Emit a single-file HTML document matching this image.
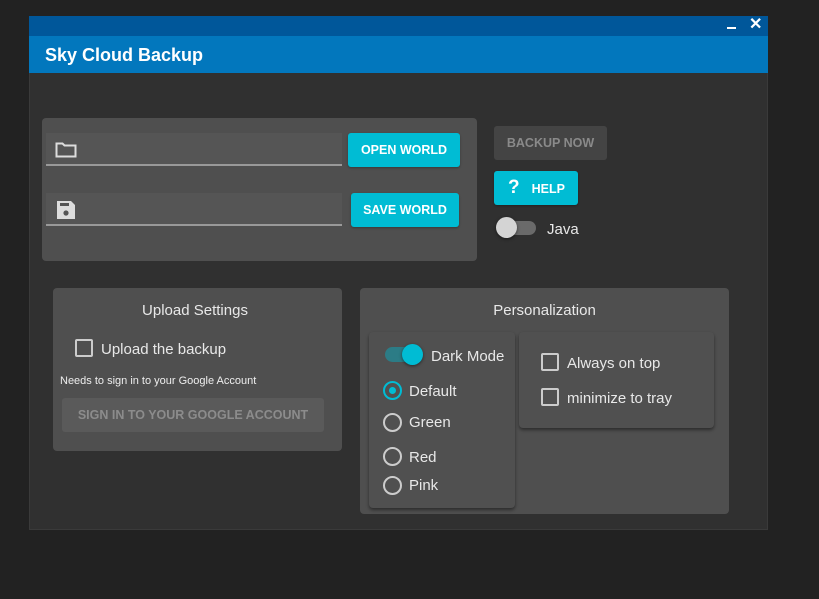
<!DOCTYPE html>
<html><head><meta charset="utf-8"><style>
*{box-sizing:border-box;margin:0;padding:0}
body{width:819px;height:599px;background:#222;font-family:"Liberation Sans",sans-serif;position:relative;overflow:hidden;color:#e8e8e8}
.a{position:absolute}
.win{left:29px;top:16px;width:739px;height:514px;background:#303030;border:1px solid #3a3a3a}
.strip{left:29px;top:16px;width:739px;height:20px;background:#00579a}
.title{left:29px;top:36px;width:739px;height:37px;background:#0277bd;color:#fff;font-size:18px;font-weight:bold;padding:9px 0 0 16px}
.panel{background:#4f4f4f;border-radius:4px}
.field{background:#555;border-bottom:2px solid #999}
.btn{background:#00bcd4;color:#fff;font-weight:bold;font-size:12.5px;border-radius:3px;text-align:center;box-shadow:0 1px 2px rgba(0,0,0,.3)}
.card{background:#505050;border-radius:4px;box-shadow:0 2px 3px rgba(0,0,0,.45)}
.cb{width:18px;height:18px;border:2px solid #ccc;border-radius:2px}
.rd{width:19px;height:19px;border:2px solid #ccc;border-radius:50%}
.t15{font-size:15px;color:#e8e8e8}
</style></head><body>
<div class="a win"></div>
<div class="a strip"></div>
<div class="a" style="left:727px;top:27px;width:9px;height:2px;background:#fff"></div>
<div class="a" style="left:749px;top:14px;color:#fff;font-size:16px;font-weight:bold">✕</div>
<div class="a title">Sky Cloud Backup</div>

<div class="a panel" style="left:42px;top:118px;width:435px;height:143px"></div>
<div class="a field" style="left:46px;top:133px;width:296px;height:33px"></div>
<svg class="a" style="left:55px;top:142px" width="22" height="16" viewBox="0 0 22 16"><path d="M1.5 1.5h6l2 2h11v11h-19z" fill="none" stroke="#ddd" stroke-width="2"/></svg>
<div class="a btn" style="left:348px;top:133px;width:112px;height:34px;line-height:35px">OPEN WORLD</div>
<div class="a field" style="left:46px;top:193px;width:296px;height:33px"></div>
<svg class="a" style="left:56px;top:200px" width="20" height="20" viewBox="0 0 20 20"><path d="M1 1h14l4 4v14h-18z" fill="#ddd"/><rect x="4" y="3" width="9" height="3" fill="#555"/><circle cx="10" cy="13" r="2.6" fill="#555"/></svg>
<div class="a btn" style="left:351px;top:193px;width:108px;height:34px;line-height:35px">SAVE WORLD</div>

<div class="a" style="left:494px;top:126px;width:113px;height:34px;background:#444;border-radius:3px;color:#8a8a8a;font-size:12.5px;font-weight:bold;text-align:center;line-height:35px">BACKUP NOW</div>
<div class="a btn" style="left:494px;top:171px;width:84px;height:34px;line-height:34px;text-align:left;padding-left:14px"><span style="font-size:19px;margin-right:12px">?</span>HELP</div>
<div class="a" style="left:500px;top:221px;width:36px;height:14px;background:#6a6a6a;border-radius:7px"></div>
<div class="a" style="left:496px;top:217px;width:21px;height:21px;background:#d4d4d4;border-radius:50%;box-shadow:0 1px 3px rgba(0,0,0,.5)"></div>
<div class="a t15" style="left:547px;top:221px">Java</div>

<div class="a panel" style="left:53px;top:288px;width:289px;height:163px"></div>
<div class="a t15" style="left:53px;top:302px;width:284px;text-align:center">Upload Settings</div>
<div class="a cb" style="left:75px;top:339px"></div>
<div class="a t15" style="left:101px;top:341px">Upload the backup</div>
<div class="a" style="left:60px;top:375px;font-size:11px;color:#eee">Needs to sign in to your Google Account</div>
<div class="a" style="left:62px;top:398px;width:262px;height:34px;background:#5a5a5a;border-radius:3px;color:#8c8c8c;font-size:12.5px;font-weight:bold;text-align:center;line-height:35px">SIGN IN TO YOUR GOOGLE ACCOUNT</div>

<div class="a panel" style="left:360px;top:288px;width:369px;height:226px"></div>
<div class="a t15" style="left:360px;top:302px;width:369px;text-align:center">Personalization</div>
<div class="a card" style="left:369px;top:332px;width:146px;height:176px"></div>
<div class="a" style="left:385px;top:347px;width:34px;height:15px;background:#2c7c86;border-radius:8px"></div>
<div class="a" style="left:402px;top:344px;width:21px;height:21px;background:#00bcd4;border-radius:50%;box-shadow:0 1px 3px rgba(0,0,0,.5)"></div>
<div class="a t15" style="left:431px;top:348px">Dark Mode</div>
<div class="a rd" style="left:383px;top:381px;border-color:#00bcd4"></div>
<div class="a" style="left:389px;top:387px;width:7px;height:7px;border-radius:50%;background:#00bcd4"></div>
<div class="a t15" style="left:409px;top:383px">Default</div>
<div class="a rd" style="left:383px;top:413px"></div>
<div class="a t15" style="left:409px;top:414px">Green</div>
<div class="a rd" style="left:383px;top:447px"></div>
<div class="a t15" style="left:409px;top:449px">Red</div>
<div class="a rd" style="left:383px;top:476px"></div>
<div class="a t15" style="left:409px;top:477px">Pink</div>
<div class="a card" style="left:519px;top:332px;width:195px;height:96px"></div>
<div class="a cb" style="left:541px;top:353px"></div>
<div class="a t15" style="left:567px;top:355px">Always on top</div>
<div class="a cb" style="left:541px;top:388px"></div>
<div class="a t15" style="left:567px;top:390px">minimize to tray</div>
</body></html>
